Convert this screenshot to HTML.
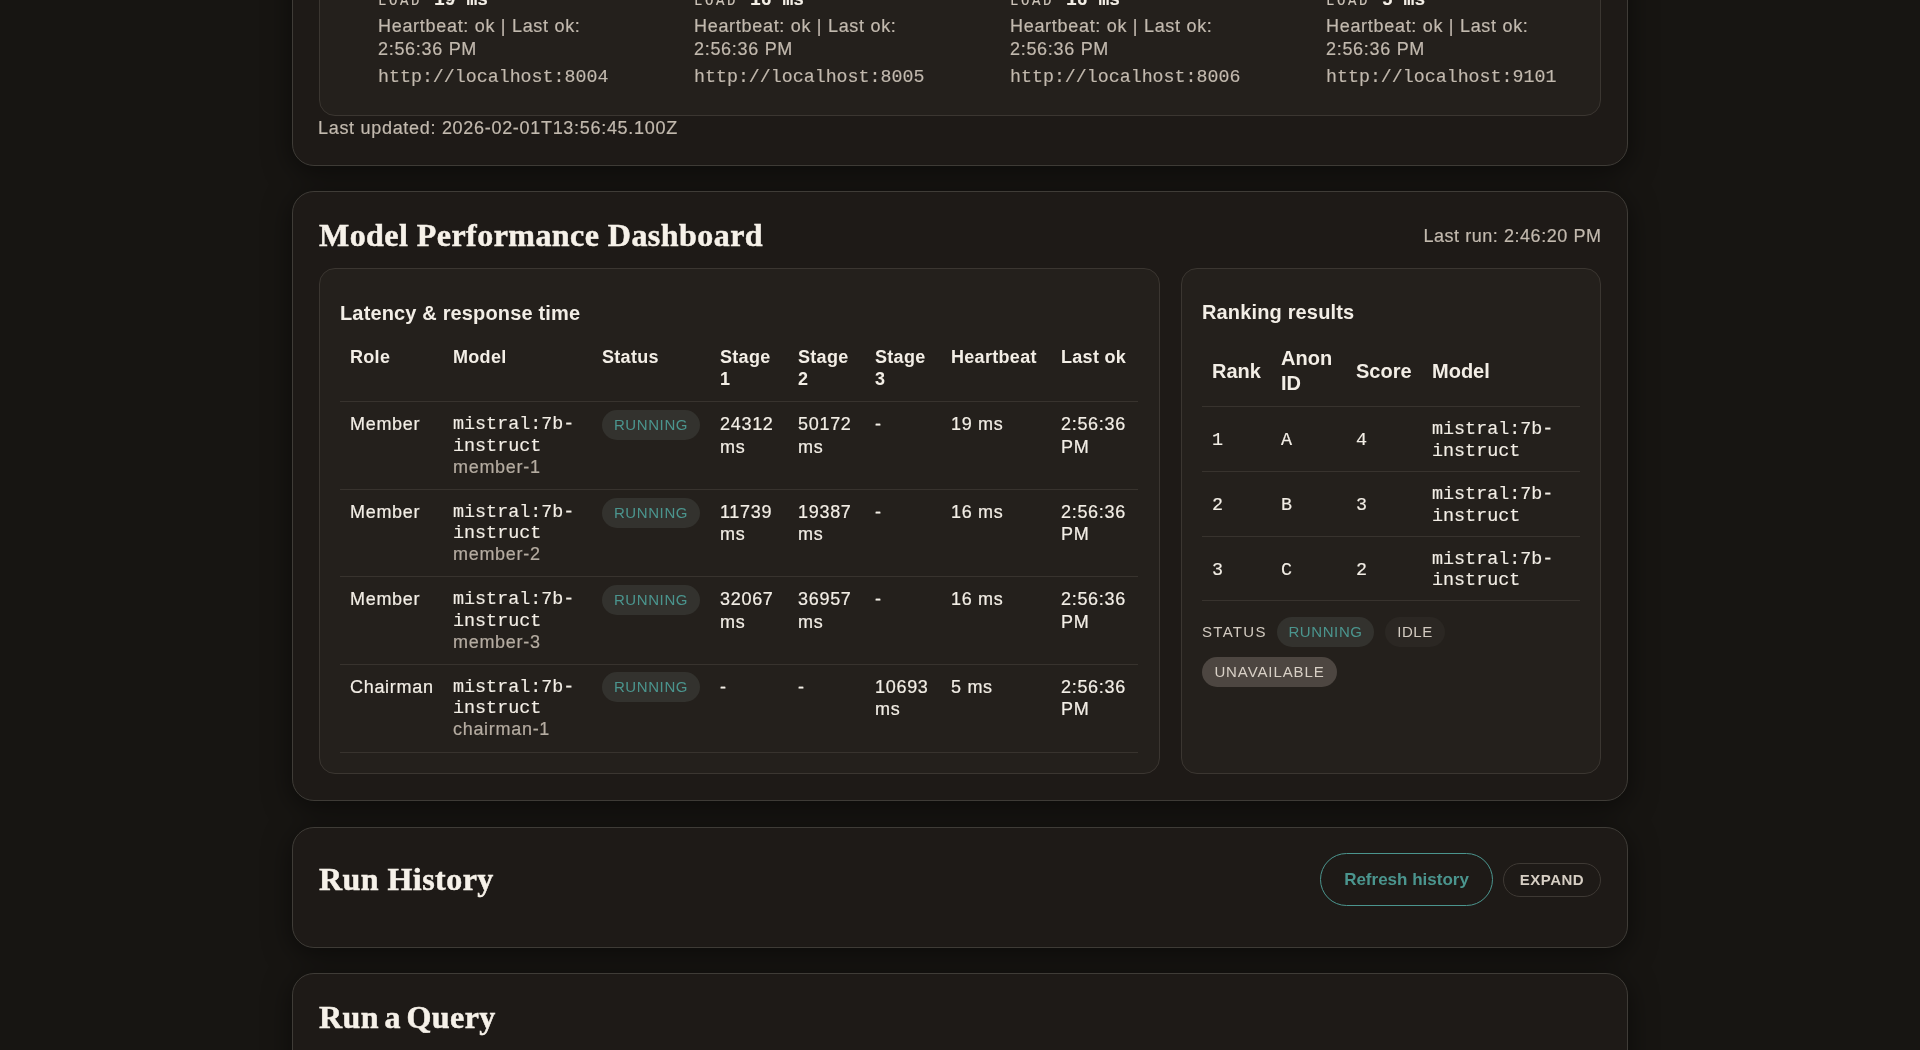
<!DOCTYPE html>
<html><head><meta charset="utf-8">
<style>
*{box-sizing:border-box;margin:0;padding:0}
html,body{width:1920px;height:1050px;overflow:hidden}
body{background:#171512;font-family:"Liberation Sans",sans-serif;color:#f3eee6;position:relative}
.abs{position:absolute;white-space:nowrap}
#root{position:absolute;left:0;top:0;width:1920px;height:1050px;will-change:transform}
.card{position:absolute;left:292px;width:1336px;background:#1e1a17;border:1px solid #3f3c37;border-radius:22px;box-shadow:0 6px 28px rgba(0,0,0,.5)}
.inner{position:absolute;background:#24201c;border:1px solid #3b3631;border-radius:16px}
.serif{font-family:"Liberation Serif",serif;font-weight:bold;font-size:32px;letter-spacing:.45px;line-height:36px;color:#f6f1e9;-webkit-text-stroke:.5px currentColor}
.t18{font-size:18px;line-height:22.5px;letter-spacing:.7px;-webkit-text-stroke:.2px currentColor}
.muted{color:#c2b9ae}
.sub{color:#b5aca1}
.mono{font-family:"Liberation Mono",monospace;-webkit-text-stroke:.15px currentColor}
.mdl{font-size:18.4px;line-height:21.5px}
.val{font-size:18.4px;line-height:21.5px}
.hd{font-weight:bold;font-size:18px;line-height:22.5px;letter-spacing:.3px}
.pill{position:absolute;height:30px;border-radius:15px;font-size:15px;line-height:30px;letter-spacing:.6px;text-align:center;white-space:nowrap}
.run{background:#33322e;color:#4b958e}
.hr{position:absolute;height:1px;background:#38332e}
.hd2{font-weight:bold;font-size:20px;line-height:25.4px}
.sub2{font-size:20px;font-weight:bold;line-height:24px;letter-spacing:.15px}
</style></head><body><div id="root">
<div class="card" style="top:-400px;height:566px"></div>
<div class="inner" style="left:319px;top:-300px;width:1282px;height:416px"></div>
<div class="abs mono" style="left:378px;top:-7.7px;font-size:14px;letter-spacing:2.6px;color:#cfc6bb;line-height:18px">LOAD</div>
<div class="abs mono" style="left:434px;top:-9.8px;font-size:18px;font-weight:bold;line-height:20px">19 ms</div>
<div class="abs t18 muted" style="left:378px;top:15.3px;line-height:23px">Heartbeat: ok | Last ok:<br>2:56:36 PM</div>
<div class="abs mono muted" style="left:378px;top:66.1px;font-size:18.3px;line-height:22px">http://localhost:8004</div>
<div class="abs mono" style="left:694px;top:-7.7px;font-size:14px;letter-spacing:2.6px;color:#cfc6bb;line-height:18px">LOAD</div>
<div class="abs mono" style="left:750px;top:-9.8px;font-size:18px;font-weight:bold;line-height:20px">16 ms</div>
<div class="abs t18 muted" style="left:694px;top:15.3px;line-height:23px">Heartbeat: ok | Last ok:<br>2:56:36 PM</div>
<div class="abs mono muted" style="left:694px;top:66.1px;font-size:18.3px;line-height:22px">http://localhost:8005</div>
<div class="abs mono" style="left:1010px;top:-7.7px;font-size:14px;letter-spacing:2.6px;color:#cfc6bb;line-height:18px">LOAD</div>
<div class="abs mono" style="left:1066px;top:-9.8px;font-size:18px;font-weight:bold;line-height:20px">16 ms</div>
<div class="abs t18 muted" style="left:1010px;top:15.3px;line-height:23px">Heartbeat: ok | Last ok:<br>2:56:36 PM</div>
<div class="abs mono muted" style="left:1010px;top:66.1px;font-size:18.3px;line-height:22px">http://localhost:8006</div>
<div class="abs mono" style="left:1326px;top:-7.7px;font-size:14px;letter-spacing:2.6px;color:#cfc6bb;line-height:18px">LOAD</div>
<div class="abs mono" style="left:1382px;top:-9.8px;font-size:18px;font-weight:bold;line-height:20px">5 ms</div>
<div class="abs t18 muted" style="left:1326px;top:15.3px;line-height:23px">Heartbeat: ok | Last ok:<br>2:56:36 PM</div>
<div class="abs mono muted" style="left:1326px;top:66.1px;font-size:18.3px;line-height:22px">http://localhost:9101</div>
<div class="abs t18 muted" style="left:318px;top:117.0px">Last updated: 2026-02-01T13:56:45.100Z</div>
<div class="card" style="top:191px;height:610px"></div>
<div class="abs serif" style="left:319px;top:217.2px">Model Performance Dashboard</div>
<div class="abs t18 muted" style="right:319px;top:224.5px;letter-spacing:.55px;margin-right:-.5px">Last run: 2:46:20 PM</div>
<div class="inner" style="left:319px;top:268px;width:841px;height:506px"></div>
<div class="inner" style="left:1181px;top:268px;width:420px;height:506px"></div>
<div class="abs sub2" style="left:340px;top:300.5px">Latency &amp; response time</div>
<div class="abs sub2" style="left:1202px;top:299.9px">Ranking results</div>
<div class="abs hd" style="left:350px;top:345.5px">Role</div>
<div class="abs hd" style="left:453px;top:345.5px">Model</div>
<div class="abs hd" style="left:602px;top:345.5px">Status</div>
<div class="abs hd" style="left:720px;top:345.5px">Stage<br>1</div>
<div class="abs hd" style="left:798px;top:345.5px">Stage<br>2</div>
<div class="abs hd" style="left:875px;top:345.5px">Stage<br>3</div>
<div class="abs hd" style="left:951px;top:345.5px">Heartbeat</div>
<div class="abs hd" style="left:1061px;top:345.5px">Last ok</div>
<div class="hr" style="left:340px;top:401px;width:798px"></div>
<div class="abs t18" style="left:350px;top:413.0px">Member</div>
<div class="abs mono mdl" style="left:453px;top:414.4px">mistral:7b-<br>instruct</div>
<div class="abs t18 sub" style="left:453px;top:455.7px">member-1</div>
<div class="pill run" style="left:602px;top:410px;width:98px">RUNNING</div>
<div class="abs t18" style="left:720px;top:413.0px">24312<br>ms</div>
<div class="abs t18" style="left:798px;top:413.0px">50172<br>ms</div>
<div class="abs t18" style="left:875px;top:413.0px">-</div>
<div class="abs t18" style="left:951px;top:413.0px">19 ms</div>
<div class="abs t18" style="left:1061px;top:413.0px">2:56:36<br>PM</div>
<div class="hr" style="left:340px;top:489px;width:798px"></div>
<div class="abs t18" style="left:350px;top:500.5px">Member</div>
<div class="abs mono mdl" style="left:453px;top:501.9px">mistral:7b-<br>instruct</div>
<div class="abs t18 sub" style="left:453px;top:543.2px">member-2</div>
<div class="pill run" style="left:602px;top:498px;width:98px">RUNNING</div>
<div class="abs t18" style="left:720px;top:500.5px">11739<br>ms</div>
<div class="abs t18" style="left:798px;top:500.5px">19387<br>ms</div>
<div class="abs t18" style="left:875px;top:500.5px">-</div>
<div class="abs t18" style="left:951px;top:500.5px">16 ms</div>
<div class="abs t18" style="left:1061px;top:500.5px">2:56:36<br>PM</div>
<div class="hr" style="left:340px;top:576px;width:798px"></div>
<div class="abs t18" style="left:350px;top:588.0px">Member</div>
<div class="abs mono mdl" style="left:453px;top:589.4px">mistral:7b-<br>instruct</div>
<div class="abs t18 sub" style="left:453px;top:630.7px">member-3</div>
<div class="pill run" style="left:602px;top:585px;width:98px">RUNNING</div>
<div class="abs t18" style="left:720px;top:588.0px">32067<br>ms</div>
<div class="abs t18" style="left:798px;top:588.0px">36957<br>ms</div>
<div class="abs t18" style="left:875px;top:588.0px">-</div>
<div class="abs t18" style="left:951px;top:588.0px">16 ms</div>
<div class="abs t18" style="left:1061px;top:588.0px">2:56:36<br>PM</div>
<div class="hr" style="left:340px;top:664px;width:798px"></div>
<div class="abs t18" style="left:350px;top:675.5px">Chairman</div>
<div class="abs mono mdl" style="left:453px;top:676.9px">mistral:7b-<br>instruct</div>
<div class="abs t18 sub" style="left:453px;top:718.2px">chairman-1</div>
<div class="pill run" style="left:602px;top:672px;width:98px">RUNNING</div>
<div class="abs t18" style="left:720px;top:675.5px">-</div>
<div class="abs t18" style="left:798px;top:675.5px">-</div>
<div class="abs t18" style="left:875px;top:675.5px">10693<br>ms</div>
<div class="abs t18" style="left:951px;top:675.5px">5 ms</div>
<div class="abs t18" style="left:1061px;top:675.5px">2:56:36<br>PM</div>
<div class="hr" style="left:340px;top:752px;width:798px"></div>
<div class="abs hd2" style="left:1212px;top:359.0px">Rank</div>
<div class="abs hd2" style="left:1281px;top:346.0px">Anon<br>ID</div>
<div class="abs hd2" style="left:1356px;top:359.0px">Score</div>
<div class="abs hd2" style="left:1432px;top:359.0px">Model</div>
<div class="hr" style="left:1202px;top:406px;width:378px"></div>
<div class="abs mono val" style="left:1212px;top:430.4px">1</div>
<div class="abs mono val" style="left:1281px;top:430.4px">A</div>
<div class="abs mono val" style="left:1356px;top:430.4px">4</div>
<div class="abs mono mdl" style="left:1432px;top:419.4px">mistral:7b-<br>instruct</div>
<div class="hr" style="left:1202px;top:471.0px;width:378px"></div>
<div class="abs mono val" style="left:1212px;top:495.1px">2</div>
<div class="abs mono val" style="left:1281px;top:495.1px">B</div>
<div class="abs mono val" style="left:1356px;top:495.1px">3</div>
<div class="abs mono mdl" style="left:1432px;top:484.1px">mistral:7b-<br>instruct</div>
<div class="hr" style="left:1202px;top:535.7px;width:378px"></div>
<div class="abs mono val" style="left:1212px;top:559.8px">3</div>
<div class="abs mono val" style="left:1281px;top:559.8px">C</div>
<div class="abs mono val" style="left:1356px;top:559.8px">2</div>
<div class="abs mono mdl" style="left:1432px;top:548.8px">mistral:7b-<br>instruct</div>
<div class="hr" style="left:1202px;top:600.4px;width:378px"></div>
<div class="abs" style="left:1202px;top:621.8px;font-size:15px;line-height:20px;letter-spacing:1.3px;color:#d2cac0">STATUS</div>
<div class="pill run" style="left:1277px;top:617px;width:97px">RUNNING</div>
<div class="pill" style="left:1385px;top:617px;width:60px;background:#2b2723;color:#d2cac0">IDLE</div>
<div class="pill" style="left:1202px;top:657px;width:135px;background:#4d4641;color:#d8d0c6;letter-spacing:.9px">UNAVAILABLE</div>
<div class="card" style="top:827px;height:121px"></div>
<div class="abs serif" style="left:319px;top:861.2px">Run History</div>
<div class="abs" style="left:1320px;top:853px;width:173px;height:53px;border:1.6px solid #4b958e;border-radius:27px;color:#4b958e;font-weight:bold;font-size:17px;line-height:51px;text-align:center">Refresh history</div>
<div class="abs" style="left:1503px;top:863px;width:98px;height:34px;border:1px solid #3e3934;border-radius:17px;color:#d6cec3;font-weight:bold;font-size:15px;line-height:32px;letter-spacing:.5px;text-align:center">EXPAND</div>
<div class="card" style="top:973px;height:300px"></div>
<div class="abs serif" style="left:319px;top:999.2px;word-spacing:-3px">Run a Query</div>
</div></body></html>
